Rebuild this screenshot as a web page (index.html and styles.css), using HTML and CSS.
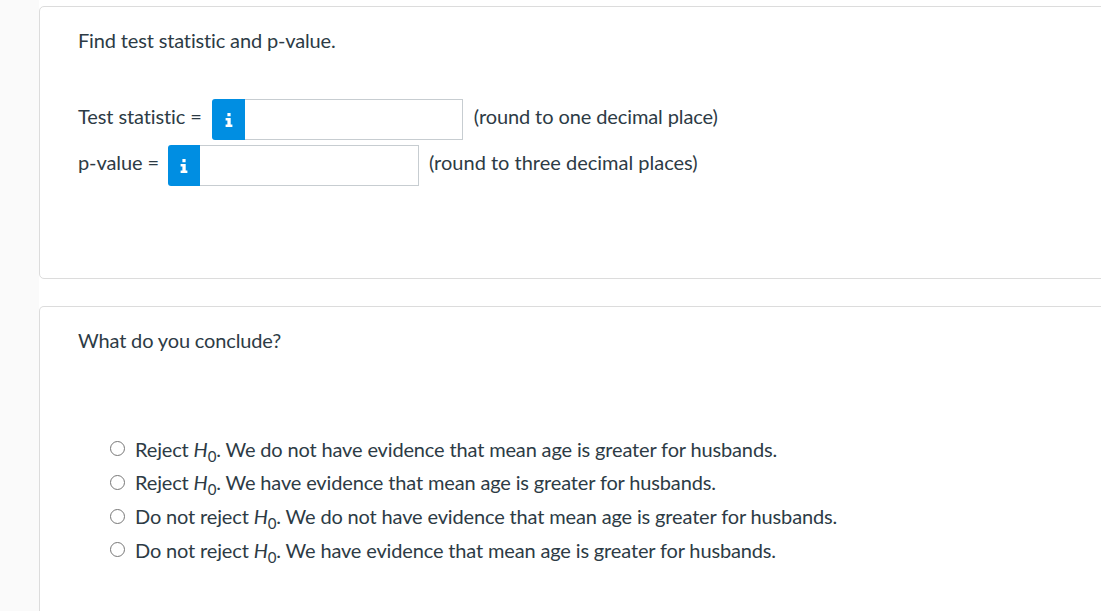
FILE: index.html
```html
<!DOCTYPE html>
<html lang="en">
<head>
    <meta charset="UTF-8">
    <meta name="viewport" content="width=device-width, initial-scale=1.0">
    <title>Question</title>
    <link rel="stylesheet" href="styles.css">
</head>
<body>
    <div class="content">
        <div class="card card-first">
            <p class="prompt">Find test statistic and p-value.</p>
            <div class="answer-row answer-row-first">
                <span class="answer-label">Test statistic =</span>
                <span class="info-btn">
                    <svg class="info-icon" viewBox="0 0 8 14"><path d="M2.400 0h3.200v3.200H2.400zM.6 5h5.100v6.400h1.700V14H.6v-2.600h1.800V7.600H.6z"/></svg>
                </span>
                <input class="answer-input" type="text">
                <span class="answer-hint">(round to one decimal place)</span>
            </div>
            <div class="answer-row">
                <span class="answer-label answer-label-short">p-value =</span>
                <span class="info-btn info-btn-narrow">
                    <svg class="info-icon" viewBox="0 0 8 14"><path d="M2.400 0h3.200v3.200H2.400zM.6 5h5.100v6.400h1.700V14H.6v-2.600h1.800V7.600H.6z"/></svg>
                </span>
                <input class="answer-input answer-input-narrow" type="text">
                <span class="answer-hint answer-hint-wide">(round to three decimal places)</span>
            </div>
        </div>
        <div class="card card-second">
            <p class="prompt">What do you conclude?</p>
            <ul class="choices">
                <li class="choice"><span class="radio"></span><span>Reject <i>H</i><sub>0</sub>. We do not have evidence that mean age is greater for husbands.</span></li>
                <li class="choice"><span class="radio"></span><span>Reject <i>H</i><sub>0</sub>. We have evidence that mean age is greater for husbands.</span></li>
                <li class="choice"><span class="radio"></span><span>Do not reject <i>H</i><sub>0</sub>. We do not have evidence that mean age is greater for husbands.</span></li>
                <li class="choice"><span class="radio"></span><span>Do not reject <i>H</i><sub>0</sub>. We have evidence that mean age is greater for husbands.</span></li>
            </ul>
        </div>
    </div>
</body>
</html>
```

FILE: styles.css
```css
html, body {
    height: 100%;
}

body {
    margin: 0;
    background-color: #fafafa;
    font-family: Lato, sans-serif;
    font-size: 20px;
    letter-spacing: -0.15px;
    color: #2d3b45;
    overflow: hidden;
}

.content {
    margin-left: 39px;
    padding-top: 6px;
    height: 100%;
    background-color: #ffffff;
    box-sizing: border-box;
}

.card {
    width: 1100px;
    box-sizing: border-box;
    background-color: #ffffff;
    border: 1px solid #dcdcdc;
    border-radius: 5px;
    padding: 20px 38px 0;
}

.card-first {
    height: 273px;
    margin-bottom: 27px;
}

.card-second {
    height: 305px;
    border-bottom: none;
    border-radius: 5px 5px 0 0;
}

.prompt {
    margin: 0;
    line-height: 26px;
}

.answer-row {
    display: flex;
    align-items: flex-start;
    height: 41px;
    margin-bottom: 5px;
    letter-spacing: -0.1px;
}

.answer-row-first {
    margin-top: 46px;
}

.answer-row-first .answer-hint {
    margin-left: 11px;
}

.answer-label,
.answer-hint {
    line-height: 34px;
}

.answer-label {
    margin-right: 10px;
}

.answer-label-short {
    margin-right: 9px;
}

.info-btn {
    display: flex;
    align-items: center;
    justify-content: center;
    width: 33px;
    height: 41px;
    padding-left: 1px;
    box-sizing: border-box;
    background-color: #008ee2;
    border-radius: 3px 0 0 3px;
}

.info-btn-narrow {
    width: 32px;
}

.info-icon {
    width: 8px;
    height: 14px;
    fill: #ffffff;
}

.answer-input {
    width: 218px;
    height: 41px;
    box-sizing: border-box;
    margin: 0;
    border: 1px solid #c7cdd1;
    border-left: none;
    background-color: #ffffff;
    padding: 0 6px;
}

.answer-input-narrow {
    width: 219px;
}

.answer-hint {
    margin-left: 10px;
}

.answer-hint-wide {
    letter-spacing: 0;
}

.choices {
    list-style: none;
    margin: 79px 0 0;
    padding: 0 0 0 32px;
}

.choice {
    display: flex;
    align-items: center;
    height: 33.67px;
    white-space: nowrap;
}

.radio {
    width: 15px;
    height: 15px;
    box-sizing: border-box;
    border: 1.500px solid #777777;
    border-radius: 50%;
    margin-right: 10px;
    background-color: #ffffff;
}

sub {
    font-size: 15px;
    line-height: 0;
}
```
